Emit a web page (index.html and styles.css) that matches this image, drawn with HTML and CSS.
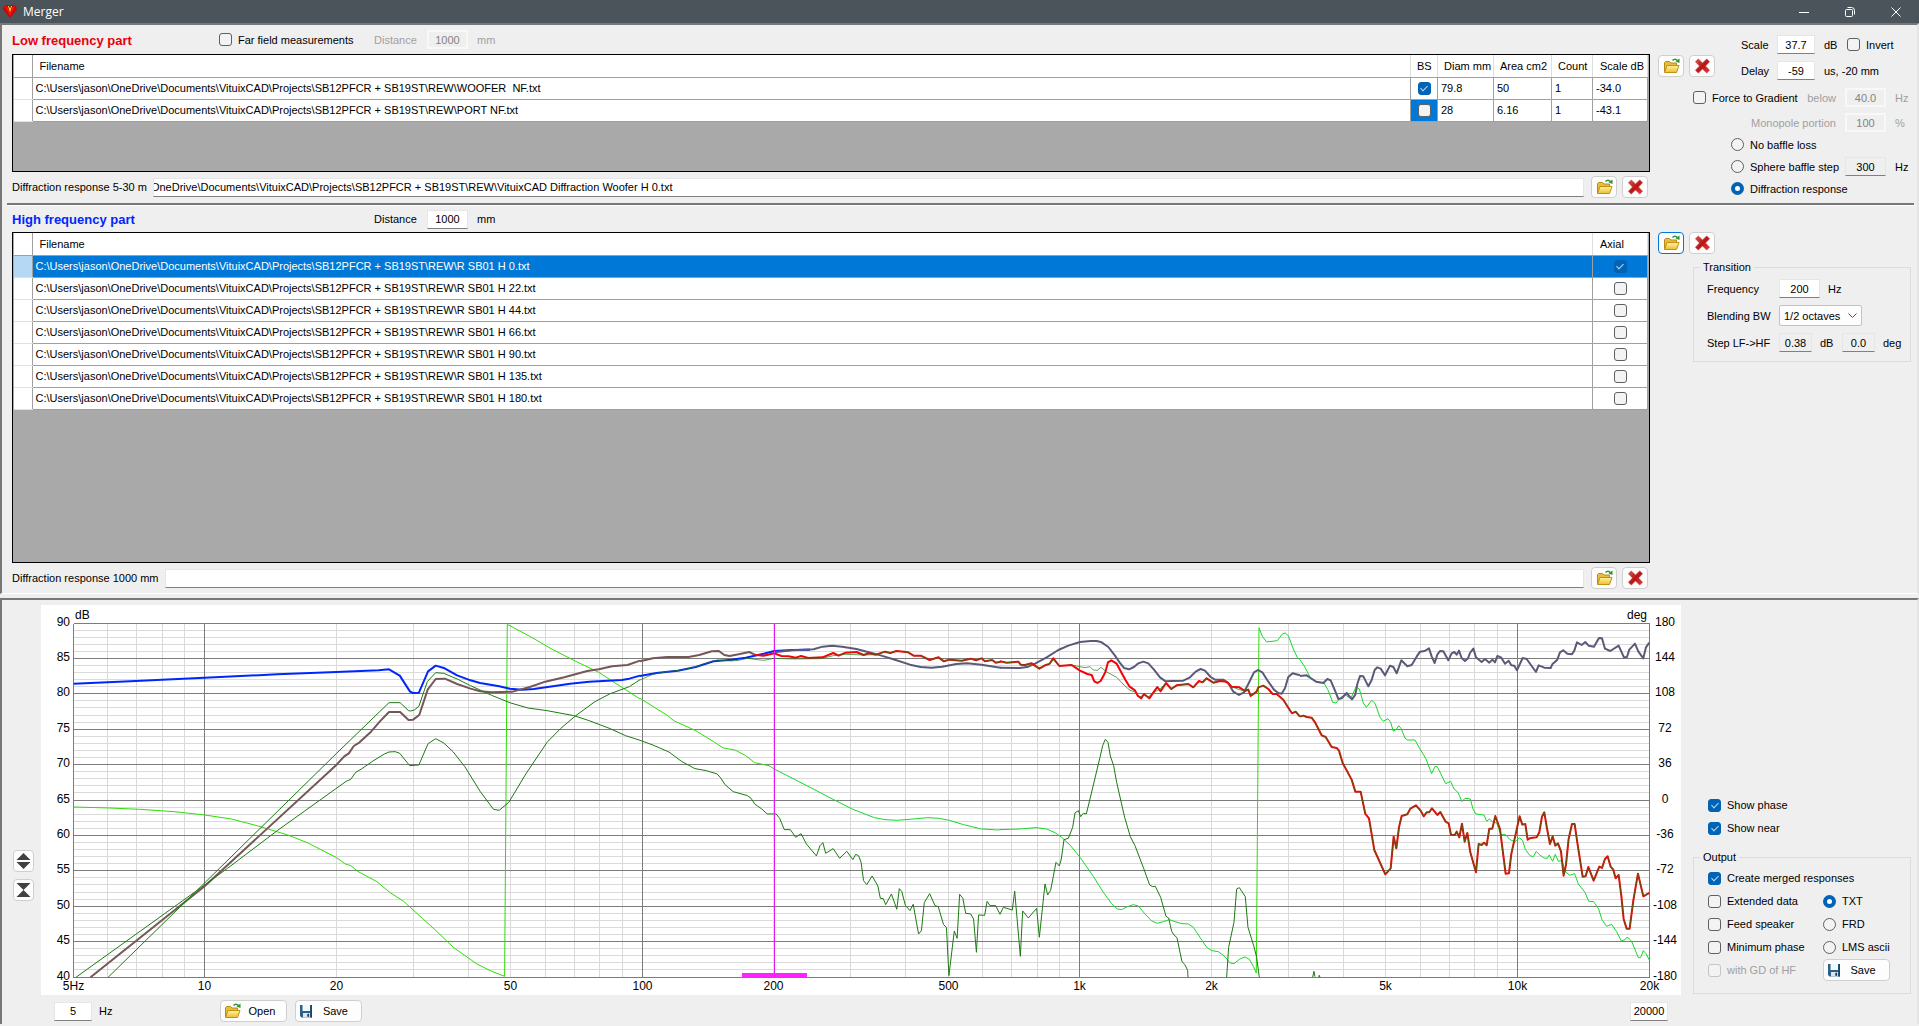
FILE: index.html
```html
<!DOCTYPE html>
<html lang="en">
<head>
    <meta charset="UTF-8">
    <meta name="viewport" content="width=device-width, initial-scale=1.0">
    <title>Merger</title>
    <link rel="stylesheet" href="styles.css">
</head>
<body>

    <!-- Shared icons -->
    <svg class="icon-defs" aria-hidden="true">
        <defs>
            <linearGradient id="folder-fill" x1="0" y1="0" x2="0" y2="1">
                <stop offset="0" stop-color="#fff3a6"/>
                <stop offset="1" stop-color="#edbd2f"/>
            </linearGradient>
            <linearGradient id="cross-fill" x1="0" y1="0" x2="1" y2="1">
                <stop offset="0" stop-color="#d8584c"/>
                <stop offset=".5" stop-color="#b91515"/>
                <stop offset="1" stop-color="#ee3a3a"/>
            </linearGradient>
            <symbol id="icon-open" viewBox="0 0 17 16">
                <path d="M1.5 14V4.500l1-1h4l1.500 1.500h5.500v2.500" fill="#e9bd3c" stroke="#b98a14"/>
                <path d="M1.500 14.500l2.500-7h12l-2.500 7z" fill="url(#folder-fill)" stroke="#c19212"/>
                <path d="M9.500 2.500c1.500-1.700 3.500-1.700 4.800 0" fill="none" stroke="#2f9130" stroke-width="1.400"/>
                <path d="M12.500 3.500l4 1.500v-4.500z" fill="#2f9130"/>
            </symbol>
            <symbol id="icon-delete" viewBox="0 0 17 17">
                <path d="M1 4l3-3 4.500 4.200L13 1l3 3-4.300 4.500L16 13l-3 3-4.500-4.300L4 16l-3-3 4.300-4.500z" fill="url(#cross-fill)" stroke="#b73530" stroke-width=".6"/>
            </symbol>
            <symbol id="icon-save" viewBox="0 0 14 14">
                <path d="M1 1h12v12.500H2.500L1 12z" fill="#2c6089"/>
                <path d="M3.500 1h7.500v6H3.500z" fill="#f2f7fa"/>
                <path d="M4 9h7v4.500H4z" fill="#dfe7ec"/>
                <path d="M8.300 9.800h1.800v3H8.300z" fill="#173b5a"/>
                <path d="M11.500 1H13v12.500h-1.500z" fill="#174568"/>
            </symbol>
        </defs>
    </svg>

    <header class="titlebar">
        <svg class="app-icon" viewBox="0 0 14 14">
            <path d="M2 0h10l2 4-7 9L0 4z" fill="#d80000"/>
            <path d="M2 1h3l2 4 2-4h3l-5 10z" fill="#f01808"/>
            <path d="M4 1h6L7 6z" fill="#8e0000"/>
            <path d="M5 1h1l1 3 1-3h1L7 7z" fill="#ffe95c"/>
        </svg>
        <span class="title">Merger</span>
        <div class="window-buttons">
            <button aria-label="Minimize"><svg viewBox="0 0 10 10"><path d="M0 5.500h10"/></svg></button>
            <button aria-label="Restore"><svg viewBox="0 0 10 10"><path d="M.5 3.500q0-1 1-1h5q1 0 1 1v5q0 1-1 1h-5q-1 0-1-1zM2.500.5h4q3 0 3 3v4"/></svg></button>
            <button aria-label="Close"><svg viewBox="0 0 10 10"><path d="M.5.5l9 9M9.500.5l-9 9"/></svg></button>
        </div>
    </header>

    <main>
        <div class="panel">

            <!-- Low frequency part -->
            <section class="part">
                <div class="part-main">
                    <div class="part-head">
                        <h2 class="low">Low frequency part</h2>
                        <label class="check far-field"><input type="checkbox">Far field measurements</label>
                        <label class="distance disabled" for="lf-distance">Distance</label>
                        <input class="num" id="lf-distance" type="text" value="1000" disabled>
                        <span class="disabled">mm</span>
                    </div>
                    <div class="grid grid-low">
                        <table>
                            <colgroup>
                                <col class="c-row"><col><col class="c-bs"><col class="c-diam"><col class="c-area"><col class="c-count"><col class="c-scale">
                            </colgroup>
                            <thead>
                                <tr><th></th><th>Filename</th><th class="tight">BS</th><th class="tight">Diam mm</th><th class="tight">Area cm2</th><th class="tight">Count</th><th>Scale dB</th></tr>
                            </thead>
                            <tbody>
                                <tr>
                                    <td></td><td class="file">C:\Users\jason\OneDrive\Documents\VituixCAD\Projects\SB12PFCR + SB19ST\REW\WOOFER  NF.txt</td>
                                    <td class="tick"><input type="checkbox" aria-label="BS woofer" checked></td>
                                    <td>79.8</td><td>50</td><td>1</td><td>-34.0</td>
                                </tr>
                                <tr>
                                    <td></td><td class="file">C:\Users\jason\OneDrive\Documents\VituixCAD\Projects\SB12PFCR + SB19ST\REW\PORT NF.txt</td>
                                    <td class="tick current"><input type="checkbox" aria-label="BS port"></td>
                                    <td>28</td><td>6.16</td><td>1</td><td>-43.1</td>
                                </tr>
                            </tbody>
                        </table>
                    </div>
                    <div class="diffraction">
                        <label for="lf-diffraction">Diffraction response 5-30 m</label>
                        <input class="path scrolled" id="lf-diffraction" type="text" value="OneDrive\Documents\VituixCAD\Projects\SB12PFCR + SB19ST\REW\VituixCAD Diffraction Woofer H 0.txt">
                        <button class="btn icon-btn" aria-label="Open"><svg><use href="#icon-open"/></svg></button>
                        <button class="btn icon-btn" aria-label="Delete"><svg><use href="#icon-delete"/></svg></button>
                    </div>
                </div>

                <div class="side">
                    <div class="side-top">
                        <div class="tools">
                            <button class="btn icon-btn" aria-label="Open"><svg><use href="#icon-open"/></svg></button>
                            <button class="btn icon-btn" aria-label="Delete"><svg><use href="#icon-delete"/></svg></button>
                        </div>
                        <div class="scale-delay">
                            <div class="row">
                                <label class="short" for="scale">Scale</label>
                                <input class="num" id="scale" type="text" value="37.7">
                                <span class="unit">dB</span>
                                <label class="check"><input type="checkbox">Invert</label>
                            </div>
                            <div class="row">
                                <label class="short" for="delay">Delay</label>
                                <input class="num" id="delay" type="text" value="-59">
                                <span>us, -20 mm</span>
                            </div>
                        </div>
                    </div>
                    <div class="baffle">
                        <div class="baffle-row">
                            <span class="pair">
                                <label class="check"><input type="checkbox">Force to Gradient</label>
                                <label class="disabled" for="below">below</label>
                            </span>
                            <input class="num" id="below" type="text" value="40.0" disabled>
                            <span class="disabled">Hz</span>
                        </div>
                        <div class="baffle-row spaced">
                            <label class="disabled right" for="monopole">Monopole portion</label>
                            <input class="num" id="monopole" type="text" value="100" disabled>
                            <span class="disabled">%</span>
                        </div>
                        <div class="baffle-row"><label class="check indent"><input type="radio" name="baffle">No baffle loss</label></div>
                        <div class="baffle-row">
                            <label class="check indent"><input type="radio" name="baffle">Sphere baffle step</label>
                            <input class="num readonly" type="text" value="300" aria-label="Sphere baffle step frequency" readonly>
                            <span>Hz</span>
                        </div>
                        <div class="baffle-row"><label class="check indent"><input type="radio" name="baffle" checked>Diffraction response</label></div>
                    </div>
                </div>
            </section>

            <hr>

            <!-- High frequency part -->
            <section class="part">
                <div class="part-main">
                    <div class="part-head">
                        <h2 class="high">High frequency part</h2>
                        <label class="distance" for="hf-distance">Distance</label>
                        <input class="num" id="hf-distance" type="text" value="1000">
                        <span>mm</span>
                    </div>
                    <div class="grid grid-high">
                        <table>
                            <colgroup><col class="c-row"><col><col class="c-axial"></colgroup>
                            <thead>
                                <tr><th></th><th>Filename</th><th>Axial</th></tr>
                            </thead>
                            <tbody>
                                <tr class="selected"><td></td><td class="file">C:\Users\jason\OneDrive\Documents\VituixCAD\Projects\SB12PFCR + SB19ST\REW\R SB01 H 0.txt</td><td class="tick"><input type="checkbox" aria-label="Axial 0" checked></td></tr>
                                <tr><td></td><td class="file">C:\Users\jason\OneDrive\Documents\VituixCAD\Projects\SB12PFCR + SB19ST\REW\R SB01 H 22.txt</td><td class="tick"><input type="checkbox" aria-label="Axial 22"></td></tr>
                                <tr><td></td><td class="file">C:\Users\jason\OneDrive\Documents\VituixCAD\Projects\SB12PFCR + SB19ST\REW\R SB01 H 44.txt</td><td class="tick"><input type="checkbox" aria-label="Axial 44"></td></tr>
                                <tr><td></td><td class="file">C:\Users\jason\OneDrive\Documents\VituixCAD\Projects\SB12PFCR + SB19ST\REW\R SB01 H 66.txt</td><td class="tick"><input type="checkbox" aria-label="Axial 66"></td></tr>
                                <tr><td></td><td class="file">C:\Users\jason\OneDrive\Documents\VituixCAD\Projects\SB12PFCR + SB19ST\REW\R SB01 H 90.txt</td><td class="tick"><input type="checkbox" aria-label="Axial 90"></td></tr>
                                <tr><td></td><td class="file">C:\Users\jason\OneDrive\Documents\VituixCAD\Projects\SB12PFCR + SB19ST\REW\R SB01 H 135.txt</td><td class="tick"><input type="checkbox" aria-label="Axial 135"></td></tr>
                                <tr><td></td><td class="file">C:\Users\jason\OneDrive\Documents\VituixCAD\Projects\SB12PFCR + SB19ST\REW\R SB01 H 180.txt</td><td class="tick"><input type="checkbox" aria-label="Axial 180"></td></tr>
                            </tbody>
                        </table>
                    </div>
                    <div class="diffraction">
                        <label for="hf-diffraction">Diffraction response 1000 mm</label>
                        <input class="path" id="hf-diffraction" type="text" value="">
                        <button class="btn icon-btn" aria-label="Open"><svg><use href="#icon-open"/></svg></button>
                        <button class="btn icon-btn" aria-label="Delete"><svg><use href="#icon-delete"/></svg></button>
                    </div>
                </div>

                <div class="side">
                    <div class="side-top">
                        <div class="tools">
                            <button class="btn icon-btn focused" aria-label="Open"><svg><use href="#icon-open"/></svg></button>
                            <button class="btn icon-btn" aria-label="Delete"><svg><use href="#icon-delete"/></svg></button>
                        </div>
                    </div>
                    <fieldset class="transition">
                        <legend>Transition</legend>
                        <div class="row">
                            <label class="name" for="frequency">Frequency</label>
                            <input class="num" id="frequency" type="text" value="200">
                            <span>Hz</span>
                        </div>
                        <div class="row">
                            <label class="name" for="blending">Blending BW</label>
                            <select id="blending"><option>1/2 octaves</option></select>
                        </div>
                        <div class="row">
                            <label class="name" for="step-db">Step LF-&gt;HF</label>
                            <input class="num readonly small" id="step-db" type="text" value="0.38" readonly>
                            <span class="unit">dB</span>
                            <input class="num readonly small" type="text" value="0.0" aria-label="Step phase" readonly>
                            <span>deg</span>
                        </div>
                    </fieldset>
                </div>
            </section>
        </div>

        <!-- Response chart -->
        <div class="panel chart-panel">
            <div class="zoom-buttons">
                <button class="btn" aria-label="Expand scale"><svg viewBox="0 0 14 16"><path d="M7 0l7 7H0zM7 16l7-7H0z"/></svg></button>
                <button class="btn" aria-label="Compress scale"><svg viewBox="0 0 14 16"><path d="M0 1h14L7 8zM0 15h14L7 8z"/></svg></button>
            </div>

            <svg class="chart" viewBox="41 606 1640 390">
                <g id="gridlines"></g>

                <!-- 5 Hz - 100 Hz -->
                <g transform="translate(40 600) scale(.3827 .3333)">
                    <polyline class="trace phase" points="88,624 180,627 260,631 350,638 430,648 500,660 570,681 650,709 700,732 775,776 798,795 812,800 830,817 880,848 915,881 950,907 1030,990 1080,1045 1140,1094 1180,1117 1214,1132 1221,76 1280,112 1340,152 1400,187 1460,220 1500,250 1568,300"/>
                    <polyline class="trace blue" points="88,254 250,246 430,236 620,226 775,219 885,214 912,211 940,230 967,278 975,282 990,281 1014,217 1034,200 1055,207 1090,229 1125,244 1150,252 1200,262 1228,269 1260,272 1290,270 1345,261 1385,254 1435,248 1520,243 1540,239 1568,230"/>
                    <polyline class="trace brown" points="132,1135 430,862 775,497 795,472 807,463 820,441 835,430 865,398 890,365 912,339 941,339 963,363 975,362 991,348 1013,272 1034,240 1058,239 1090,255 1125,269 1150,277 1180,280 1235,278 1280,264 1320,248 1370,235 1430,216 1460,211 1495,202 1535,198 1568,185"/>
                    <polyline class="trace near" points="178,1135 430,852 775,463 912,311 941,311 963,335 968,336 978,333 990,322 1012,248 1034,221 1055,223 1090,240 1125,260 1180,289 1230,312 1275,327 1325,335 1395,350 1435,365 1490,389 1530,410 1568,424"/>
                    <polyline class="trace near" points="94,1135 430,858 490,808 620,695 800,547 812,541 825,520 840,510 870,486 900,465 912,459 928,458 940,463 966,500 990,498 1014,434 1034,419 1055,432 1080,459 1110,503 1150,577 1185,631 1200,634 1225,610 1270,524 1325,430 1360,389 1400,350 1450,308 1490,284 1540,263 1568,242"/>
                </g>

                <!-- 100 Hz - 650 Hz -->
                <g transform="translate(560 600) scale(.35714 .3333)">
                    <polyline class="trace phase" points="224,298 300,349 320,366 380,395 430,428 457,447 490,453 520,470 545,491 585,500 600,510"/>
                    <polyline class="trace phase-high" points="600,510 700,565 770,604 820,631 880,656 910,662 945,664 990,660 1030,656 1060,658 1090,664 1130,677 1180,690 1225,693 1234,692"/>
                    <polyline class="trace blue" points="224,231 270,222 330,215 380,204 430,187 480,182 520,176 570,164 600,156 650,153 700,152"/>
                    <polyline class="trace slate" points="600,160 650,154 710,151 735,143 762,140 790,143 830,150 870,161 900,170 940,183 980,197 1010,204 1040,206 1070,203 1110,195 1140,193 1180,197 1220,204 1234,206"/>
                    <polyline class="trace brown" points="224,187 260,178 300,174 360,174 390,168 425,157 445,156 460,168 475,171 500,166 530,159 545,167"/>
                    <polyline class="trace red" points="545,167 570,170 600,163 620,171 640,172 660,176 675,171 695,177 735,175 765,162 780,170 800,161 830,159 850,168 865,163 885,167 910,158 925,162 942,156 975,160 990,170 1010,170 1035,183 1060,175 1075,187 1090,182 1125,185 1150,179 1165,184 1180,178 1190,187 1210,183 1220,191 1234,188"/>
                    <polyline class="trace near" points="224,243 260,226 300,218 340,213 380,204 400,196 440,183 480,186 500,184 525,178 545,181 570,184 600,178 650,180 730,179 765,170 800,166 850,168 885,167 910,158 925,162 942,156 975,160 990,170 1010,170 1035,183 1060,175 1075,187 1090,182 1125,185 1150,179 1165,184 1180,178 1190,187 1210,183 1220,191 1234,188"/>
                    <polyline class="trace near" points="224,424 260,438 305,459 340,487 378,509 410,515 440,525 450,537 462,557 485,578 525,590 535,598 545,615 565,630 580,645 605,645 615,658 628,692 645,692 660,715 675,704 690,735 718,771 728,740 736,731 744,763 765,749 783,778 803,757 820,782 828,766 836,770 843,790 850,845 859,857 874,831 890,861 897,898 905,899 912,917 928,885 943,931 950,869 957,878 967,919 980,935 989,916 1004,1005 1012,995 1020,911 1035,884 1050,920 1059,923 1074,977 1082,985 1089,1130 1104,996 1112,1018 1119,886 1128,898 1136,943 1150,945 1158,960 1166,1060 1172,948 1189,949 1196,907 1204,920 1220,920 1232,946"/>
                </g>

                <!-- 650 Hz - 3.2 kHz -->
                <g transform="translate(1000 600) scale(.3333)">
                    <polyline class="trace phase-high" points="0,692 60,690 108,686 140,690 165,701 185,715 210,738 240,775 280,832 310,880 335,914 352,930 365,932 380,924 400,917 415,921 435,945 455,966 472,973 490,968 508,962 525,968 545,974 565,975 580,985 600,1015 620,1045 635,1055 655,1058 675,1073 690,1092 702,1094 720,1080 735,1074 748,1081 760,1102 769,1122"/>
                    <polyline class="trace phase" points="769,1122 777,86"/>
                    <polyline class="trace phase-high" points="777,86 787,112 800,129 832,125 848,104 856,102 865,110 880,150 892,175 900,182"/>
                    <polyline class="trace slate" points="0,206 60,207 85,203 105,194 140,175 175,153 205,140 240,129 272,126 290,126 305,130 325,144 345,170 360,192 372,207 387,211 402,204 415,193 430,188 445,193 462,212 480,235 497,247 515,246 550,245 570,235 587,218 602,210 615,215 632,234 645,242 670,242 685,253 700,278 717,288 732,280 745,255 762,220 775,213 788,221 805,248 822,272 835,282 845,284 855,268 865,234 878,223 900,229"/>
                    <polyline class="trace red" points="0,187 20,191 55,188 62,197 75,198 95,193 118,209 135,199 148,195 160,178 178,201 215,198 240,215 262,225 275,228 283,247 292,252 302,246 316,220 324,190 334,184 350,194 365,222 377,244 388,262 405,274 413,290 424,298 432,285 448,298 462,278 472,264 482,277 498,252 514,270 530,259 565,255 580,265 597,246 608,250 620,238 640,251 660,246 680,248 695,263 718,265 735,276 745,272 752,291 770,278 775,265 790,260 805,270 818,285 830,285 850,302 865,326 876,343 887,338 900,353"/>
                    <polyline class="trace near" points="0,187 20,191 55,188 62,197 75,198 95,193 118,209 135,199 148,195 160,182 178,201 215,198 240,203 255,206 270,203 280,213 292,214 303,205 320,219 350,235 374,260 390,274 405,279 420,294 432,288 445,294 462,280 480,270 498,252 514,270 530,259 565,255 580,265 597,246 608,250 620,238 640,251 660,246 680,248 695,263 718,272 735,276 745,272 752,288 770,278 775,265 790,260 805,270 818,285 830,285 850,302 865,326 876,343 887,338 900,353"/>
                    <polyline class="trace near" points="0,946 10,925 37,933 44,876 61,1072 68,936 85,957 110,928 118,1015 135,855 143,888 152,874 168,790 178,801 184,780 192,722 205,718 218,685 225,642 235,635 242,653 250,643 259,645 270,600 300,475 308,440 316,421 324,430 331,471 341,500 350,550 374,655 391,713 405,740 431,808 449,858 458,863 466,862 482,895 498,952 506,957 515,997 522,1008 531,1016 546,1088 554,1096 563,1114 564,1135"/>
                    <polyline class="trace near" points="680,1135 686,1045 702,970 710,870 718,866 736,893 744,985 762,1043 770,1075 778,1135"/>
                    <path class="trace near" d="M938 1135l4-18 3 16M956 1135l2-6 2 6"/>
                </g>

                <!-- 3.2 kHz - 20 kHz -->
                <g transform="translate(1300 600) scale(.3333)">
                    <polyline class="trace phase-high" points="0,182 15,205 32,238 48,247 72,252 85,275 98,310 108,312 122,295 135,287 152,299 168,264 178,270 190,312 199,325 215,304 225,313 240,355 250,367 264,359 272,370 280,397 290,390 296,380 303,388 315,417 322,423 345,423 360,450 378,480 395,524 405,503 412,503 437,554 452,547 462,570 474,580 486,608 495,598 511,600 519,630 527,645 552,648 560,667 568,660 580,670 590,672 603,707 617,707 630,722 645,728 659,716 668,725 676,751 690,770 700,773 709,757 718,767 732,777 742,778 748,768 758,787 766,766 775,787 785,785 798,820 810,829 824,824 835,855 855,880 866,907 881,908 896,930 906,962 920,982 935,976 950,998 964,1026 975,1022 982,1014 995,1027 1015,1076 1022,1076 1030,1055 1038,1064 1048,1083"/>
                    <polyline class="trace slate" points="0,231 20,229 32,237 48,248 70,252 82,240 92,244 105,275 115,300 125,298 140,282 156,301 166,287 172,255 180,231 190,232 205,262 215,243 224,213 232,205 242,209 255,229 270,200 280,204 290,223 304,184 322,202 335,198 350,173 360,158 374,156 387,148 395,172 404,192 412,167 420,156 430,157 445,184 455,163 463,159 470,167 477,155 485,177 495,186 504,178 510,162 520,149 528,175 545,189 555,180 568,191 577,182 585,190 592,171 603,175 615,194 626,185 634,199 643,200 651,214 668,177 680,180 708,219 716,199 733,206 752,207 757,196 772,182 780,160 790,154 802,164 816,166 823,155 831,130 845,138 856,129 866,140 882,143 897,117 906,118 915,149 931,156 956,140 972,175 981,174 988,152 1005,134 1015,157 1030,178 1038,145 1048,131"/>
                    <polyline class="trace red" points="0,353 10,350 20,354 35,356 45,370 65,409 77,414 95,444 110,447 117,455 128,492 155,542 166,578 182,578 196,645 207,658 223,753 256,826 272,808 281,713 289,748 297,685 305,651 322,646 331,629 348,619 362,635 371,652 380,640 388,640 396,628 412,648 421,639 437,668 446,673 453,707 464,708 470,698 478,715 486,674 494,728 502,702 511,760 528,820 536,735 545,738 552,731 560,739 568,689 577,689 586,651 600,690 617,824 627,823 634,765 650,692 659,652 667,677 676,675 683,722 692,717 710,715 718,700 726,653 733,640 741,688 750,735 758,712 766,740 774,733 783,757 791,830 798,798 806,720 816,675 824,675 832,730 848,833 857,832 865,804 881,845 898,803 906,807 915,780 923,772 932,803 940,812 947,838 956,828 964,890 971,960 980,989 989,989 1000,905 1014,824 1030,892 1048,882"/>
                    <polyline class="trace near" points="0,353 10,350 20,354 35,356 45,370 65,409 77,414 95,444 110,447 117,455 128,492 155,542 166,578 182,578 196,645 207,658 223,753 256,826 272,808 281,713 289,748 297,685 305,651 322,646 331,629 348,619 362,635 371,652 380,640 388,640 396,628 412,648 421,639 437,668 446,673 453,707 464,708 470,698 478,715 486,674 494,728 502,702 511,760 528,820 536,735 545,738 552,731 560,739 568,689 577,689 586,651 600,690 617,824 627,823 634,765 650,692 659,652 667,677 676,675 683,722 692,717 710,715 718,700 726,653 733,640 741,688 750,735 758,712 766,740 774,733 783,757 791,830 798,798 806,720 816,675 824,675 832,730 848,833 857,832 865,804 881,845 898,803 906,807 915,780 923,772 932,803 940,812 947,838 956,828 964,890 971,960 980,989 989,989 1000,905 1014,824 1030,892 1048,882"/>
                </g>

                <!-- Transition frequency and blending width -->
                <path class="marker" d="M774.5 625v353"/>
                <rect class="marker-band" x="742" y="974" width="65" height="4"/>

                <g id="labels"></g>
            </svg>

            <div class="options">
                <label class="check"><input type="checkbox" checked>Show phase</label>
                <label class="check"><input type="checkbox" checked>Show near</label>
                <fieldset class="output">
                    <legend>Output</legend>
                    <label class="check wide"><input type="checkbox" checked>Create merged responses</label>
                    <label class="check"><input type="checkbox">Extended data</label>
                    <label class="check"><input type="radio" name="format" checked>TXT</label>
                    <label class="check"><input type="checkbox">Feed speaker</label>
                    <label class="check"><input type="radio" name="format">FRD</label>
                    <label class="check"><input type="checkbox">Minimum phase</label>
                    <label class="check"><input type="radio" name="format">LMS ascii</label>
                    <label class="check disabled"><input type="checkbox" disabled>with GD of HF</label>
                    <button class="btn text-btn"><svg class="disk"><use href="#icon-save"/></svg><span>Save</span></button>
                </fieldset>
            </div>

            <div class="chart-bar">
                <input class="num" id="min-freq" type="text" value="5">
                <label for="min-freq">Hz</label>
                <button class="btn text-btn first"><svg><use href="#icon-open"/></svg><span>Open</span></button>
                <button class="btn text-btn"><svg class="disk"><use href="#icon-save"/></svg><span>Save</span></button>
                <input class="num max-freq" type="text" value="20000" aria-label="Maximum frequency">
            </div>
        </div>
    </main>

    <script src="chart.js"></script>
</body>
</html>
```
FILE: styles.css
```css
* {
    box-sizing: border-box;
}

body {
    margin: 0;
    min-height: 100vh;
    background: #efefef;
    color: #000;
    font-family: "Liberation Sans", Arial, sans-serif;
    font-size: 11px;
    line-height: 14px;
}

input, button, select {
    font: inherit;
    color: inherit;
    margin: 0;
}

.icon-defs {
    position: absolute;
    width: 0;
    height: 0;
}

.disabled {
    color: #a0a0a0;
}

/* Title bar */
.titlebar {
    display: flex;
    align-items: center;
    height: 23px;
    padding-left: 3px;
    background: #4a545a;
    color: #fff;
}
.app-icon {
    width: 14px;
    height: 14px;
    margin-right: 6px;
}
.title {
    font-family: "Open Sans", "Noto Sans", sans-serif;
    font-size: 12px;
}
.window-buttons {
    display: flex;
    margin-left: auto;
}
.window-buttons button {
    width: 46px;
    height: 20px;
    padding: 0;
    border: none;
    background: none;
}
.window-buttons svg {
    display: block;
    width: 10px;
    height: 10px;
    margin: 0 auto;
    fill: none;
    stroke: #fff;
}

/* Sunken panels */
.panel {
    border-top: 2px solid #777;
    border-left: 2px solid #777;
    border-bottom: 1px solid #fff;
    border-right: 2px solid #e4e4e4;
    padding-bottom: 4px;
}
.part {
    display: flex;
    padding-left: 10px;
}
.part-main {
    flex: 1;
    min-width: 0;
}
.side {
    width: 267px;
}
hr {
    height: 3px;
    margin: 5px 3px 0 5px;
    border: none;
    border-top: 2px solid #777;
    border-bottom: 1px solid #fff;
}

.part-head {
    display: flex;
    align-items: center;
    height: 29px;
}
hr + .part .part-head {
    height: 26px;
}
h2 {
    width: 207px;
    margin: 0;
    padding-top: 2px;
    font-size: 13px;
    line-height: 16px;
}
.low {
    color: #e8000d;
}
.high {
    color: #0026ff;
}
.far-field {
    width: 155px;
}
.distance {
    width: 53px;
}
.high + .distance {
    margin-left: 155px;
}
.part-head .num {
    width: 41px;
    margin-right: 9px;
}

/* Inputs */
.num, .path {
    height: 19px;
    padding: 0;
    border: 1px solid #e6e6e6;
    border-bottom-color: #808080;
    border-radius: 0;
    background: #fff;
}
.num {
    width: 38px;
    text-align: center;
}
.num:disabled {
    border: 2px solid #f8f8f8;
    background: #efefef;
    color: #838383;
}
.readonly {
    background: #efefef;
}

input[type="checkbox"], input[type="radio"] {
    appearance: none;
    flex: none;
    display: block;
    width: 13px;
    height: 13px;
    border: 1px solid #606060;
    border-radius: 3px;
    background: #f3f3f3;
}
input[type="radio"] {
    border-radius: 50%;
}
input[type="checkbox"]:checked {
    border-color: #0063b5;
    background: #0063b5;
}
input[type="checkbox"]:checked::after {
    content: "";
    display: block;
    width: 3px;
    height: 6px;
    margin: 1px auto;
    border: solid #b8d8f2;
    border-width: 0 1px 1px 0;
    transform: rotate(45deg);
}
input[type="radio"]:checked {
    border: 4px solid #0063b5;
    background: #fff;
}
input[type="checkbox"]:disabled {
    border-color: #c4c4c4;
}
.check {
    display: flex;
    align-items: center;
    gap: 6px;
    white-space: nowrap;
}

select {
    appearance: none;
    width: 83px;
    height: 21px;
    padding: 0 4px;
    border: 1px solid #c2c2c2;
    border-radius: 2px;
    background: #fdfdfd url("data:image/svg+xml,%3Csvg xmlns='http://www.w3.org/2000/svg' width='9' height='6'%3E%3Cpath d='M.5 .5l4 4 4-4' fill='none' stroke='%23505050'/%3E%3C/svg%3E") no-repeat right 4px center;
}

/* Buttons */
.btn {
    display: flex;
    align-items: center;
    justify-content: center;
    height: 22px;
    padding: 0;
    border: 1px solid #cfcfcf;
    border-radius: 4px;
    background: #fdfdfd;
}
.btn svg {
    width: 17px;
    height: 16px;
}
.icon-btn {
    width: 26px;
}
.focused {
    border-color: #0078d7;
}
.text-btn {
    width: 67px;
    justify-content: flex-start;
    padding-left: 3px;
}
.text-btn span {
    flex: 1;
    text-align: center;
    padding-right: 4px;
}
.text-btn .disk {
    width: 14px;
    height: 14px;
}

/* File grids */
.grid {
    border: 1px solid #000;
    background: #a9a9a9;
    padding: 0 1px;
}
.grid-low {
    min-height: 118px;
}
.grid-high {
    min-height: 331px;
}
table {
    width: 100%;
    table-layout: fixed;
    border-collapse: collapse;
    background: #fff;
}
th, td {
    height: 22px;
    padding: 0 0 0 3px;
    border: 1px solid #a0a0a0;
    border-width: 0 1px 1px 0;
    font-weight: normal;
    text-align: left;
    white-space: pre;
}
th {
    padding-left: 7px;
    border-right-color: #dedede;
}
th:first-child {
    border-right-color: #a0a0a0;
}
td:first-child {
    border-bottom-color: #e0e0e0;
}
.tight {
    padding-left: 6px;
}
.c-row {
    width: 18px;
}
.c-bs {
    width: 27px;
}
.c-diam {
    width: 56px;
}
.c-area {
    width: 58px;
}
.c-count {
    width: 41px;
}
.c-scale, .c-axial {
    width: 55px;
}
.tick {
    padding: 0;
}
.tick input {
    margin: 0 auto;
}
.current {
    background: #0078d7;
}
.selected td {
    background: #0078d7;
    color: #fff;
}
.selected td:first-child {
    background: #b5d9f4;
}

.diffraction {
    display: flex;
    align-items: center;
    gap: 5px;
    margin-top: 4px;
    padding-right: 2px;
}
.diffraction .path {
    flex: 1;
    min-width: 0;
    margin: 0 2px 0 1px;
}
.diffraction .scrolled {
    text-indent: -3px;
}

/* Right hand settings */
.side-top {
    display: flex;
    gap: 26px;
    padding-left: 8px;
}
.tools {
    display: flex;
    gap: 5px;
    padding-top: 30px;
}
hr + .part .tools {
    padding-top: 26px;
}
.row {
    display: flex;
    align-items: center;
    gap: 9px;
}
.scale-delay {
    display: flex;
    flex-direction: column;
    gap: 7px;
    padding-top: 10px;
}
.short {
    width: 27px;
}
.unit {
    width: 14px;
}
.baffle {
    display: grid;
    gap: 3px;
    margin: 8px 0 0 43px;
}
.baffle-row {
    display: grid;
    grid-template-columns: 143px 41px 1fr;
    align-items: center;
    gap: 9px;
    min-height: 19px;
}
.baffle-row .num {
    width: 41px;
}
.spaced {
    margin-top: 3px;
}
.pair {
    display: flex;
    justify-content: space-between;
}
.right {
    text-align: right;
}
.indent {
    padding-left: 38px;
}

fieldset {
    width: 218px;
    margin: 0;
    border: 1px solid #dcdcdc;
}
legend {
    padding: 0 3px;
}
.transition {
    display: grid;
    gap: 7px;
    margin: 6px 0 0 43px;
    padding: 5px 6px 9px;
}
.transition .row {
    gap: 8px;
}
.transition .name {
    width: 71px;
    padding-left: 7px;
    white-space: nowrap;
}
.transition .num {
    width: 41px;
}
.transition .small {
    width: 33px;
}

/* Chart panel */
.chart-panel {
    display: grid;
    grid-template-columns: 39px minmax(0, 1fr) 236px;
    margin-top: 4px;
    padding-top: 5px;
    padding-bottom: 2px;
    border-bottom: none;
}
.zoom-buttons {
    display: flex;
    flex-direction: column;
    justify-content: flex-end;
    gap: 7px;
    padding: 0 0 94px 11px;
}
.zoom-buttons .btn {
    width: 21px;
}
.zoom-buttons svg {
    fill: #404040;
}
.chart {
    display: block;
    width: 100%;
    background: #fff;
    font-size: 12px;
}
.trace {
    fill: none;
    vector-effect: non-scaling-stroke;
    stroke-linejoin: round;
}
.blue {
    stroke: #0026ff;
    stroke-width: 2px;
}
.brown {
    stroke: #765757;
    stroke-width: 2px;
}
.slate {
    stroke: #5a5a78;
    stroke-width: 2px;
}
.red {
    stroke: #f80008;
    stroke-width: 2px;
}
.near {
    stroke: #1c7a12;
    stroke-width: 1px;
}
/* keep the measured curve readable where the near curve runs on top of it */
.red + .near {
    stroke-opacity: .7;
}
.phase {
    stroke: #2fdc08;
    stroke-width: 1px;
}
.phase-high {
    stroke: #16d82a;
    stroke-width: 1px;
}
.marker {
    stroke: #e616f0;
    stroke-width: 1px;
}
.marker-band {
    fill: #ff22ff;
}
.minor, .major {
    fill: none;
    stroke: #dadada;
    shape-rendering: crispEdges;
}
.major {
    stroke: #7c7c7c;
}

.options {
    display: flex;
    flex-direction: column;
    justify-content: flex-end;
    gap: 9px;
    padding: 0 0 1px 12px;
}
.options > .check {
    padding-left: 15px;
}
.output {
    display: grid;
    grid-template-columns: 115px 1fr;
    align-items: center;
    row-gap: 9px;
    padding: 7px 14px 16px;
    margin-top: 6px;
}
.output legend {
    margin-left: -8px;
}
.output .btn {
    margin: -4px 0;
}
.wide {
    grid-column: 1 / 3;
}

.chart-bar {
    grid-column: 2;
    display: flex;
    align-items: center;
    padding: 5px 13px 0 13px;
}
.chart-bar label {
    margin-left: 7px;
}
.chart-bar .btn {
    margin-right: 8px;
}
.chart-bar .first {
    margin-left: 108px;
}
.chart-bar .max-freq {
    margin-left: auto;
}
```
FILE: chart.js
```js
const SVG = "http://www.w3.org/2000/svg";
const plot = { left: 73.5, right: 1649.5, top: 624.5, bottom: 978.5 };
const minFreq = 5, maxFreq = 20000;

// lines sit on half pixels so that they stay sharp
const snap = v => Math.floor(v - 0.5) + 0.5;
const xOf = f => snap(plot.left + (plot.right - plot.left) * Math.log(f / minFreq) / Math.log(maxFreq / minFreq));
const yOf = db => snap(plot.top + (90 - db) * (plot.bottom - plot.top) / 50);

function addPath(cls, d) {
    const path = document.createElementNS(SVG, "path");
    path.setAttribute("class", cls);
    path.setAttribute("d", d);
    document.getElementById("gridlines").appendChild(path);
}

function addLabel(x, y, text, anchor) {
    const label = document.createElementNS(SVG, "text");
    label.setAttribute("x", x);
    label.setAttribute("y", y);
    label.setAttribute("text-anchor", anchor);
    label.textContent = text;
    document.getElementById("labels").appendChild(label);
}

let minor = "", major = "";

for (let db = 40; db <= 90; db++) {
    const line = `M${plot.left} ${yOf(db)}H${plot.right}`;
    if (db % 5 === 0) major += line;
    else minor += line;
}
for (let decade = 1; decade <= 10000; decade *= 10) {
    for (let n = 1; n < 10; n++) {
        const f = n * decade;
        if (f < minFreq || f > maxFreq) continue;
        const line = `M${xOf(f)} ${plot.top}V${plot.bottom}`;
        if (n === 1 || f === minFreq || f === maxFreq) major += line;
        else minor += line;
    }
}
addPath("minor", minor);
addPath("major", major);

// axis labels, 5 dB and 36 degrees per step
for (let i = 0; i <= 10; i++) {
    const y = yOf(90 - i * 5) + 2;
    addLabel(70, y, 90 - i * 5, "end");
    addLabel(1665, y, 180 - i * 36, "middle");
}
addLabel(75, 620, "dB", "start");
addLabel(1647, 620, "deg", "end");

const ticks = { 5: "5Hz", 10: "10", 20: "20", 50: "50", 100: "100", 200: "200", 500: "500", 1000: "1k", 2000: "2k", 5000: "5k", 10000: "10k", 20000: "20k" };
for (const f in ticks) addLabel(xOf(Number(f)), 991, ticks[f], "middle");
```
